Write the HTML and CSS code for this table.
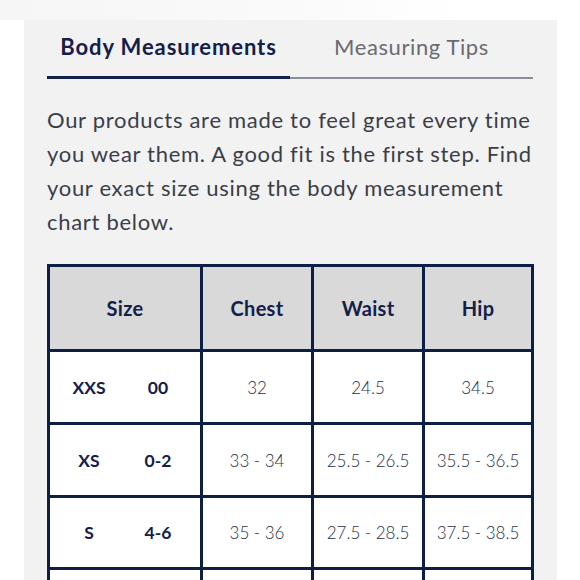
FILE: index.html
```html
<!DOCTYPE html>
<html>
<head>
<meta charset="utf-8">
<link rel="stylesheet" href="styles.css">
</head>
<body>
<div class="top"></div>
<div class="panel">
  <div class="tabs">
    <div class="tab active">Body Measurements</div>
    <div class="tab">Measuring Tips</div>
  </div>
  <p class="intro">Our products are made to feel great every time you wear them. A good fit is the first step. Find your exact size using the body measurement chart below.</p>
  <div class="chart">
    <div class="cell head">Size</div>
    <div class="cell head">Chest</div>
    <div class="cell head">Waist</div>
    <div class="cell head">Hip</div>

    <div class="cell size"><span>XXS</span><span>00</span></div>
    <div class="cell">32</div>
    <div class="cell">24.5</div>
    <div class="cell">34.5</div>

    <div class="cell size"><span>XS</span><span>0-2</span></div>
    <div class="cell">33 - 34</div>
    <div class="cell">25.5 - 26.5</div>
    <div class="cell">35.5 - 36.5</div>

    <div class="cell size"><span>S</span><span>4-6</span></div>
    <div class="cell">35 - 36</div>
    <div class="cell">27.5 - 28.5</div>
    <div class="cell">37.5 - 38.5</div>

    <div class="cell"></div>
    <div class="cell"></div>
    <div class="cell"></div>
    <div class="cell"></div>
  </div>
</div>
</body>
</html>
```
FILE: styles.css
```css
html, body {
  margin: 0;
  padding: 0;
  height: 580px;
  overflow: hidden;
}
body {
  background: #ffffff;
  font-family: Lato, "Noto Sans", sans-serif;
}
.top {
  height: 20px;
  background: linear-gradient(90deg, #f6f6f6 0%, #fafafa 50%, #ffffff 80%);
}
.panel {
  margin: 0 23px 0 24px;
  background: #f2f2f3;
  padding: 0 23px;
  height: 560px;
}
.tabs {
  display: grid;
  grid-template-columns: 243px 243px;
}
.tab {
  text-align: center;
  font-size: 22px;
  line-height: 26px;
  letter-spacing: 0.6px;
  padding-top: 14px;
  height: 43px;
  color: #6a6b70;
  border-bottom: 2px solid #8c8f99;
}
.tab.active {
  color: #13204a;
  font-weight: 700;
  letter-spacing: 0.9px;
  border-bottom: 3px solid #13204a;
  height: 42px;
}
.intro {
  margin: 24px -14px 25px 0;
  font-size: 22px;
  line-height: 34px;
  letter-spacing: 0.7px;
  color: #3b3e46;
}
.chart {
  display: grid;
  grid-template-columns: 150px 108px 108px 106px;
  grid-template-rows: 82px 70px 70px 69px 70px;
  gap: 3px;
  padding: 3px;
  background: #0e1f45;
  width: 481px;
}
.cell {
  background: #ffffff;
  display: flex;
  align-items: center;
  justify-content: center;
  font-size: 17px;
  font-weight: 300;
  color: #27304c;
}
.cell.head {
  background: #d9d9d9;
  font-weight: 700;
  font-size: 20px;
  letter-spacing: 0.3px;
  color: #13204a;
}
.cell.size {
  display: grid;
  grid-template-columns: 78px 60px;
  justify-content: start;
  align-content: center;
  font-size: 17.5px;
  font-weight: 700;
  color: #13204a;
  text-align: center;
}
```
